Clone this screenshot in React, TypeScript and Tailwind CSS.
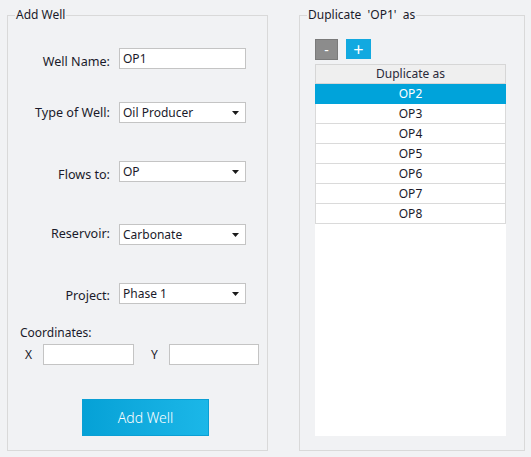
import React from "react";

const font = { fontFamily: '"Noto Sans", "Open Sans", sans-serif' };

function Arrow() {
  return (
    <svg width="7" height="4" viewBox="0 0 7 4" className="shrink-0">
      <path d="M0 0 H7 L3.5 4 Z" fill="#1a1a1a" />
    </svg>
  );
}

function Row({
  label,
  value,
  select,
  mt,
  pt,
}: {
  label: string;
  value: string;
  select?: boolean;
  mt: string;
  pt: string;
}) {
  return (
    <div className={`flex h-[21px] items-start ${mt}`}>
      <div className={`w-[102px] whitespace-nowrap text-right text-[12.6px] leading-[15px] text-[#1a1a2a] ${pt}`}>{label}</div>
      <div className="ml-[9px] flex h-[21px] w-[127px] items-center justify-between border border-[#c4c4c4] bg-white pl-[3px] pr-[6px] text-[12px] leading-[16px] text-[#1a1a2a]">
        <span>{value}</span>
        {select ? <Arrow /> : null}
      </div>
    </div>
  );
}

export default function App() {
  const rows = ["OP2", "OP3", "OP4", "OP5", "OP6", "OP7", "OP8"];
  return (
    <div className="flex h-[457px] w-[531px] bg-[#f1f2f4] pl-[7px] pt-[15px]" style={font}>
      {/* Left group */}
      <div className="flex h-[436px] w-[261px] flex-col border border-[#d9d9d9]">
        <span className="-mt-[9px] ml-[7px] w-fit bg-[#f1f2f4] px-[1px] text-[12px] leading-[16px] text-[#1a1a2a]">Add Well</span>
        <Row label="Well Name:" value="OP1" mt="mt-[25px]" pt="pt-[6px]" />
        <Row label="Type of Well:" value="Oil Producer" select mt="mt-[33px]" pt="pt-[3px]" />
        <Row label="Flows to:" value="OP" select mt="mt-[38px]" pt="pt-[6px]" />
        <Row label="Reservoir:" value="Carbonate" select mt="mt-[42px]" pt="pt-[2px]" />
        <Row label="Project:" value="Phase 1" select mt="mt-[38px]" pt="pt-[5px]" />
        <div className="ml-[12px] mt-[21px] text-[12px] leading-[16px] text-[#1a1a2a]">Coordinates:</div>
        <div className="mt-[3px] flex items-center text-[12px] leading-[16px] text-[#1a1a2a]">
          <span className="ml-[17px] w-[18px]">X</span>
          <div className="h-[21px] w-[91px] border border-[#c4c4c4] bg-white" />
          <span className="ml-[17px] w-[18px]">Y</span>
          <div className="h-[21px] w-[90px] border border-[#c4c4c4] bg-white" />
        </div>
        <button className="ml-[74px] mt-[34px] flex h-[37px] w-[127px] items-center justify-center border border-[#0a9fd4] bg-gradient-to-r from-[#05a1d6] to-[#1bb7e8] text-[14px] font-light text-white">
          Add Well
        </button>
      </div>

      {/* Right group */}
      <div className="ml-[31px] flex h-[436px] w-[226px] flex-col border border-[#d9d9d9]">
        <span className="-mt-[9px] ml-[7px] w-fit whitespace-pre bg-[#f1f2f4] px-[1px] text-[12px] leading-[16px] text-[#1a1a2a]">
          Duplicate  'OP1'  as
        </span>
        <div className="ml-[15px] mt-[16px] flex items-start">
          <button className="flex h-[21px] w-[23px] items-center justify-center border border-[#7a7a7a] bg-[#8c8c8c] text-[14px] leading-none text-white">
            -
          </button>
          <button className="ml-[8px] flex h-[20px] w-[25px] items-center justify-center bg-[#12a9e0] text-[18px] leading-none text-white">
            +
          </button>
        </div>
        <div className="ml-[15px] mt-[4px] flex h-[372px] w-[191px] flex-col bg-white">
          <div className="flex h-[20px] items-center justify-center border border-[#d6d6d6] bg-[#efefef] text-[12px] leading-[16px] text-[#2a2a3a]">
            Duplicate as
          </div>
          {rows.map((r, i) => (
            <div
              key={r}
              className={
                i === 0
                  ? "flex h-[20px] items-center justify-center bg-[#00a3da] text-[12px] leading-[16px] text-white"
                  : "flex h-[20px] items-center justify-center border-x border-b border-[#dadada] bg-white text-[12px] leading-[16px] text-[#1a1a2a]"
              }
            >
              {r}
            </div>
          ))}
        </div>
      </div>
    </div>
  );
}
